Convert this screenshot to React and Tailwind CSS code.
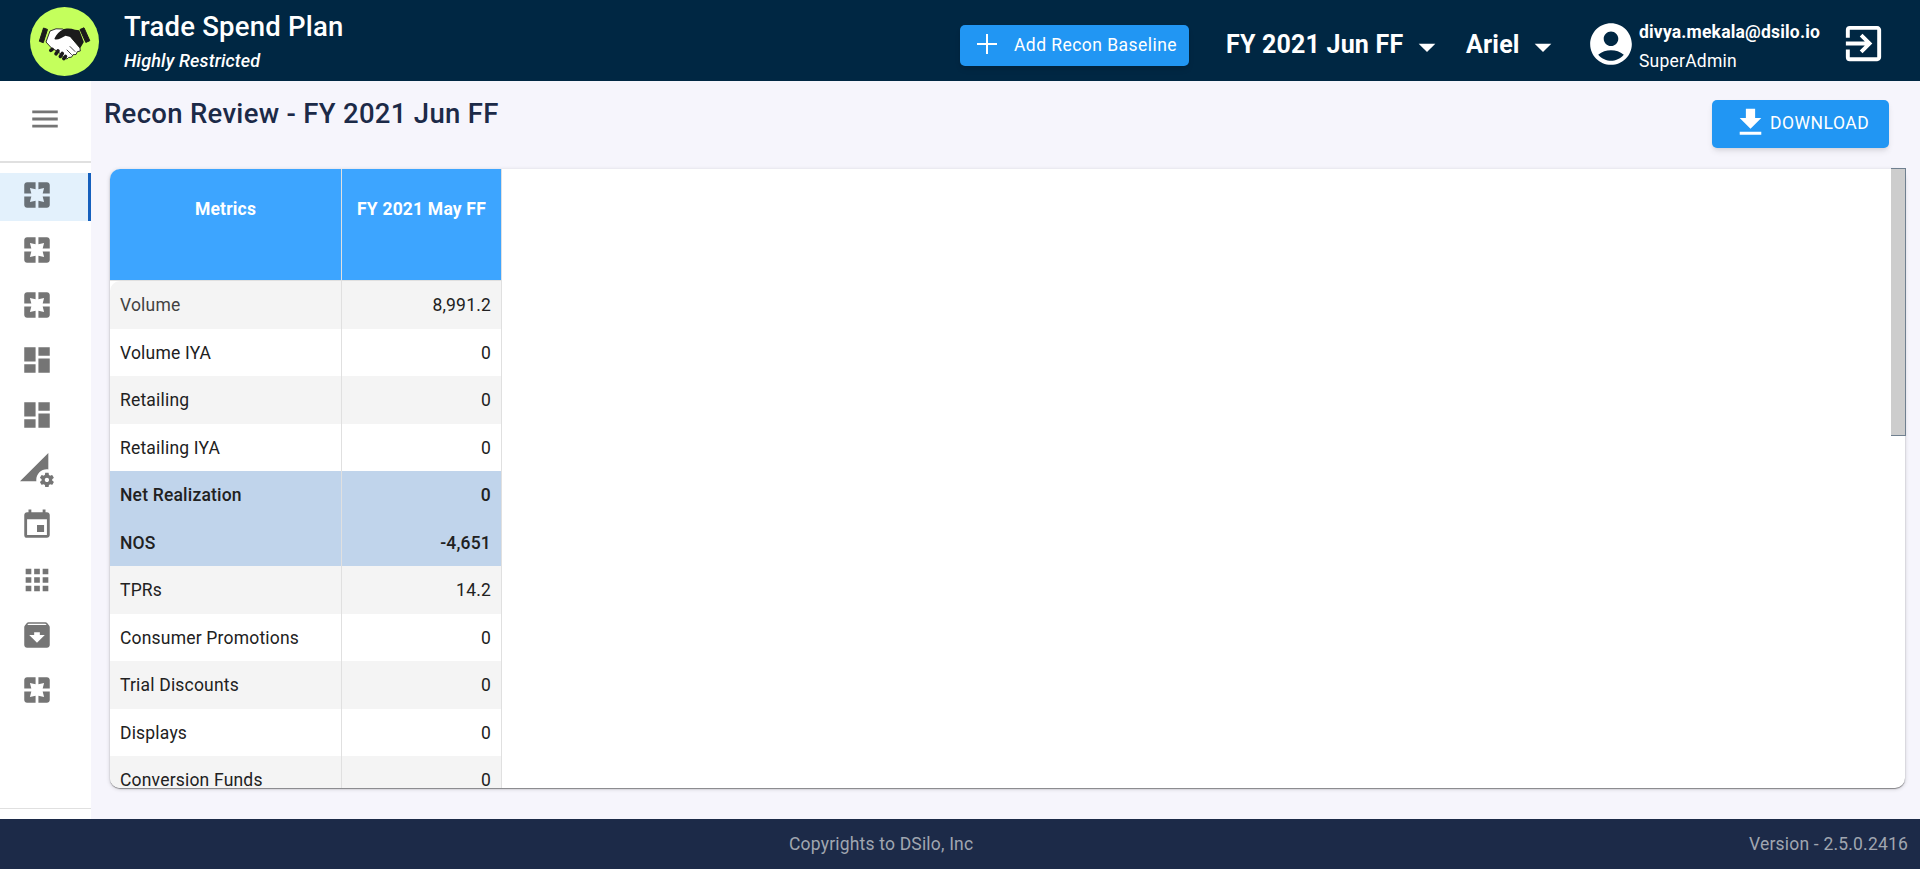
import React from "react";
import {
  MdPages, MdDashboard, MdPermDataSetting, MdEvent, MdApps, MdArchive,
  MdMenu, MdAccountCircle, MdExitToApp, MdGetApp, MdArrowDropDown,
} from "react-icons/md";

const NAV = [MdPages, MdPages, MdPages, MdDashboard, MdDashboard, MdPermDataSetting, MdEvent, MdApps, MdArchive, MdPages];

const ROWS = [
  ["Volume", "8,991.2"],
  ["Volume IYA", "0"],
  ["Retailing", "0"],
  ["Retailing IYA", "0"],
  ["Net Realization", "0", true],
  ["NOS", "-4,651", true],
  ["TPRs", "14.2"],
  ["Consumer Promotions", "0"],
  ["Trial Discounts", "0"],
  ["Displays", "0"],
  ["Conversion Funds", "0"],
];

function Logo() {
  return (
    <svg viewBox="0 0 69 69" className="h-[69px] w-[69px] shrink-0">
      <circle cx="34.5" cy="34.5" r="34.5" fill="#c4ff5c" />
      <path d="M13.500 21l4 1.400-4.200 13.300-4-1.500zM50 22.500l4-1.700 5.800 12.900-4 1.700z" fill="#1b1b1b" stroke="#1b1b1b" strokeLinejoin="round" />
      <path d="M20 24l6-2.200 6.500.200 6 5.500 11.500 13.500.3 3-3 .7-1.300 2.800-3 .2-1.500 2.500-3 .3-1.500 1.500-2.500-1-6-6-7-4-5.500-6z" fill="#fff" stroke="#1b1b1b" strokeWidth="0.9" strokeLinejoin="round" />
      <path d="M24.500 31.500c2-4.500 5-7.200 8.500-9 3-1.500 8-1.300 12 .2l4.300.6 4.500 11.700-3.600 6.200-9.700-11.200-5-1.300c-3 1.300-6.500 4-9.500 3.900-1 0-1.600-.4-1.500-1.100z" fill="#1b1b1b" />
      <path d="M20.800 43.400l1.400-1.100M26 46.800l2-2.800M30.300 49.400l2-3M33.800 51.700l1.700-2.200" stroke="#1b1b1b" strokeWidth="3.600" strokeLinecap="round" />
      <path d="M37 43l4.500 4.500M40 39.500l5 5" stroke="#1b1b1b" strokeWidth="0.8" strokeLinecap="round" />
    </svg>
  );
}

export default function App() {
  return (
    <div className="flex h-[869px] w-full flex-col overflow-hidden bg-[#f6f5fc] font-['Roboto',sans-serif] text-[17.5px] tracking-[0.19px]">
      <header className="flex h-[81px] shrink-0 bg-[#002743] text-white">
        <div className="flex items-start pl-[30px] pt-[7px]">
          <Logo />
        </div>
        <div className="ml-[25px] flex flex-col">
          <div className="mt-[9px] text-[27.5px] font-medium leading-9 tracking-[0.22px]">Trade Spend Plan</div>
          <div className="mt-[4px] text-[18px] font-medium italic leading-6 tracking-[0.15px]">Highly Restricted</div>
        </div>
        <div className="ml-auto flex items-start">
          <button className="mt-[25px] flex h-[41px] w-[229px] items-center rounded-[5px] bg-[#2196f3] pl-[17px] shadow-md">
            <svg viewBox="0 0 20 20" className="-mt-[4px] size-5" stroke="currentColor" strokeWidth="2">
              <path d="M10 0v20M0 10h20" />
            </svg>
            <span className="ml-[17px] whitespace-nowrap tracking-[0.45px]">Add Recon Baseline</span>
          </button>
          <div className="ml-[37px] mt-[29px] flex w-[240px] text-[25px] font-bold leading-8">
            <span className="w-[180.500px] whitespace-nowrap">FY 2021 Jun FF</span>
            <MdArrowDropDown className="-mt-[2px] size-[40px]" />
          </div>
          <div className="mt-[29px] flex w-[120px] text-[25px] font-bold leading-8">
            <span className="w-[57px]">Ariel</span>
            <MdArrowDropDown className="-mt-[2px] size-[40px]" />
          </div>
          <MdAccountCircle className="mt-[19px] size-[50px]" />
          <div className="ml-[3px] mt-[20px] flex w-[201px] flex-col">
            <span className="font-bold leading-6">divya.mekala@dsilo.io</span>
            <span className="mt-[5px] leading-6 tracking-[0.22px]">SuperAdmin</span>
          </div>
          <MdExitToApp className="mr-[33px] mt-[20px] size-[47px]" />
        </div>
      </header>

      <div className="flex min-h-0 flex-1">
        <aside className="flex w-[91px] shrink-0 flex-col bg-white text-[#757575]">
          <div className="flex h-[82px] items-start border-b-2 border-[#e0e0e0] pl-[28px] pt-[21px]">
            <MdMenu className="size-[34px]" />
          </div>
          <nav className="mt-[10px] flex flex-col gap-[7px]">
            {NAV.map((Icon, i) => (
              <div
                key={i}
                className={
                  "flex h-12 items-center pl-[20px] pb-[4px] " +
                  (i === 0 ? "border-r-[3px] border-[#1560bd] bg-[#e3f1fc] text-[#697177]" : "")
                }
              >
                <Icon className="size-[34px]" />
              </div>
            ))}
          </nav>
          <div className="mb-[10px] mt-auto h-px bg-[#e0e0e0]" />
        </aside>

        <main className="flex min-w-0 flex-1 flex-col">
          <div className="flex h-[88px] shrink-0 justify-between pl-[13px] pr-[31px]">
            <h1 className="mt-[15px] text-[27.5px] font-medium leading-9 tracking-[0.3px] text-[#1c2a48]">Recon Review - FY 2021 Jun FF</h1>
            <button className="mt-[19px] flex h-[48px] w-[177px] items-center rounded-[5px] bg-[#2196f3] pl-[20px] text-white shadow-md">
              <MdGetApp className="-mt-[3px] size-[37px]" />
              <span className="-mt-[1px] ml-[1px] tracking-[0.5px]">DOWNLOAD</span>
            </button>
          </div>
          <section className="relative ml-[19px] mr-[15px] flex h-[619px]">
            <div className="flex min-w-0 flex-1 overflow-hidden rounded-[10px] bg-white shadow-[0_1px_1px_0_rgba(0,0,0,0.4),0_1px_4px_0_rgba(0,0,0,0.18)]">
              <div className="flex w-[392px] flex-col border-r border-[#e0e0e0] text-[#212121]">
                <div className="flex h-[112px] shrink-0 border-b border-[#e0e0e0] bg-[#3da5ff] font-bold text-white">
                  <div className="w-[232px] border-r border-[#e0e0e0] pt-[28px] text-center leading-6">Metrics</div>
                  <div className="flex-1 whitespace-nowrap pt-[28px] text-center leading-6">FY 2021 May FF</div>
                </div>
                {ROWS.map(([name, value, strong], i) => (
                  <div
                    key={name}
                    className={
                      "flex h-[47.5px] shrink-0 items-center pt-px " +
                      (strong ? "bg-[#c0d4eb] font-medium" : i % 2 ? "bg-white" : "bg-[#f4f4f4]") +
                      (i === 0 ? " rounded-tl-[10px]" : "")
                    }
                  >
                    <div className={"w-[232px] pl-[10px] " + (i === 0 ? "text-[#424242]" : "")}>{name}</div>
                    <div className="-ml-px -mt-px flex h-[47.5px] flex-1 items-center justify-end border-l border-[#e0e0e0] pr-[10px] pt-px">{value}</div>
                  </div>
                ))}
              </div>
            </div>
            <div className="absolute -right-px -top-px h-[268px] w-[15px] border-b border-r border-t border-[#708090] bg-[#cdcdcd]" />
          </section>
        </main>
      </div>

      <footer className="flex h-[50px] shrink-0 items-center bg-[#1c2a48] text-[#a0a6b0]">
        <div className="flex-1" />
        <div className="w-[184px] whitespace-nowrap">Copyrights to DSilo, Inc</div>
        <div className="w-[947px] pr-[12px] text-right">Version - 2.5.0.2416</div>
      </footer>
    </div>
  );
}
